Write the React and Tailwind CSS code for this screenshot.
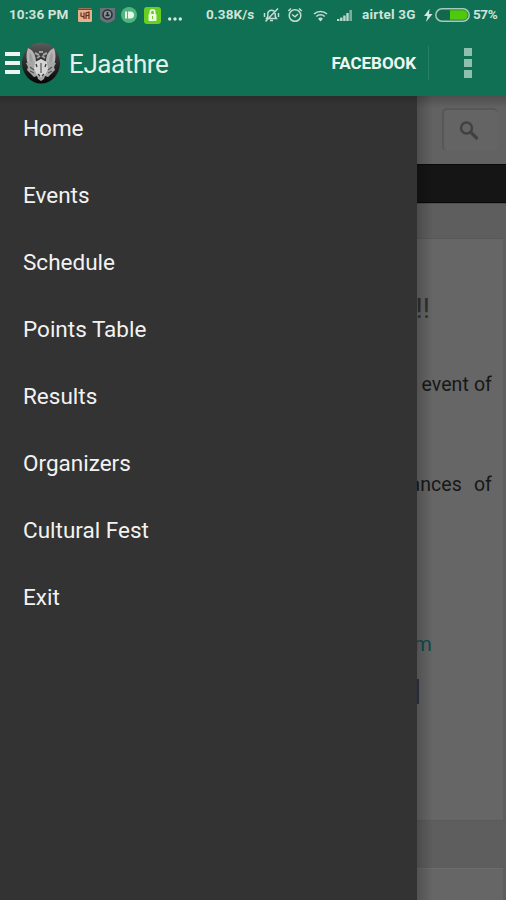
const menuItems = [
  'Home',
  'Events',
  'Schedule',
  'Points Table',
  'Results',
  'Organizers',
  'Cultural Fest',
  'Exit',
]

function StatusBar() {
  return (
    <div className="flex h-[30px] items-center pl-[9px] text-[13.500px] font-bold text-[#cfe3da] whitespace-nowrap">
      <span className="w-[69px] pb-px tracking-[0.1px]">10:36 PM</span>

      {/* notifications */}
      <svg className="w-[14px] h-[14px] mr-[8px] shrink-0" viewBox="0 0 14 14">
        <rect width="14" height="14" rx="1.5" fill="#e3b18d" />
        <path d="M0 1.200h14" stroke="#6b4a3c" strokeWidth="1.600" />
        <path d="M3 4.500V8l3 1M6 4.500V11M8 11V5l3-1v7M8 8l3-1" fill="none" stroke="#6a2d20" strokeWidth="1.200" />
      </svg>
      <svg className="w-[15px] h-[16px] mr-[6px] shrink-0" viewBox="0 0 15 16">
        <path d="M0 1h15v11l-3 2.500-4.500 1.500L3 14.500 0 12z" fill="#68727a" />
        <circle cx="7.500" cy="7.500" r="4.500" fill="#8a9096" stroke="#2c3038" strokeWidth="1.600" />
        <path d="M7.500 5v3.500M5.500 8.500h4" fill="none" stroke="#23272d" strokeWidth="1.600" />
      </svg>
      <svg className="w-[16px] h-[16px] mr-[7px] shrink-0" viewBox="0 0 16 16">
        <circle cx="8" cy="8" r="8" fill="#4fb57c" />
        <path d="M4 4.500h2v7H4zM7 4.500h2.500a3.500 3.500 0 0 1 0 7H7z" fill="#e6f6ec" />
      </svg>
      <svg className="w-[17px] h-[17px] mr-[7px] shrink-0" viewBox="0 0 17 17">
        <rect width="17" height="17" rx="3" fill="#68cf20" />
        <rect x="4.500" y="7" width="8" height="7" rx="1" fill="#f0fae9" />
        <path d="M6.300 7V5a2.200 2.200 0 0 1 4.400 0v2" fill="none" stroke="#f0fae9" strokeWidth="1.700" />
        <path d="M8.500 9v3" stroke="#68cf20" strokeWidth="1" />
      </svg>
      <svg className="w-[16px] h-[16px] mr-[22px] shrink-0" viewBox="0 0 16 16" fill="#d5e7df">
        <circle cx="1.700" cy="12" r="1.700" />
        <circle cx="7" cy="12" r="1.700" />
        <circle cx="12.300" cy="12" r="1.700" />
      </svg>

      <span className="w-[57px] pb-px tracking-[0.1px]">0.38K/s</span>
      <svg className="w-[17px] h-[16px] mr-[7px] shrink-0" viewBox="0 0 17 16" fill="none" stroke="#c3ddd2" strokeWidth="1.500">
        <path d="M3.500 11.500h10l-1.300-2V6.300a3.800 3.800 0 0 0-7.400 0v3.200zM7 13.500h3M15 1.500L2.500 14.500M1.500 6v4M15.500 6v4" />
      </svg>
      <svg className="w-[16px] h-[16px] mr-[10px] shrink-0" viewBox="0 0 16 16" fill="none" stroke="#c3ddd2" strokeWidth="1.500">
        <circle cx="8" cy="8.500" r="5.800" />
        <path d="M5 7.500l3 2.300 3-2.800M1.200 4L4 1.500M14.800 4L12 1.500" />
      </svg>
      <svg className="w-[15px] h-[13px] mr-[9px] shrink-0" viewBox="0 0 15 13" fill="none" stroke="#c3ddd2" strokeWidth="1.600">
        <path d="M1 5a9.500 9.500 0 0 1 13 0M3.300 7.500a6 6 0 0 1 8.400 0" />
        <path d="M5 9.800a3.500 3.500 0 0 1 5 0L7.500 12.500z" fill="#c3ddd2" stroke="none" />
      </svg>
      <svg className="w-[16px] h-[13px] mr-[9px] shrink-0" viewBox="0 0 16 13" fill="#bdd8cd">
        <path d="M0 10h2.400v2H0zM3.100 8.500h2.400V12H3.100zM6.200 6.500h2.400V12H6.200zM9.300 4h2.400v8H9.300z" />
        <path d="M12.400 1h2.600v11h-2.600z" opacity=".6" />
      </svg>
      <span className="w-[62px] pb-px tracking-[0.2px]">airtel 3G</span>
      <svg className="w-[9px] h-[13px] mr-[2px] shrink-0" viewBox="0 0 9 13" fill="#d5e7df">
        <path d="M5.500 0L0 7h3.500L2 13l6.500-8H5z" />
      </svg>
      <svg className="w-[35px] h-[14px] mr-[3px] shrink-0" viewBox="0 0 35 14">
        <rect x=".8" y=".8" width="33.400" height="12.400" rx="6.200" fill="#12684c" stroke="#a9c9bc" strokeWidth="1.500" />
        <path d="M15 2.200h13a4.800 4.800 0 0 1 0 9.600H15z" fill="#4fc90c" />
      </svg>
      <span className="pb-px tracking-[-0.4px]">57%</span>
    </div>
  )
}

function Logo() {
  return (
    <svg className="w-10 h-[42px] shrink-0" viewBox="0 0 40 42">
      <defs>
        <linearGradient id="disc" x1="0" y1="0" x2="0" y2="1">
          <stop offset="0" stopColor="#5c5c5c" />
          <stop offset=".45" stopColor="#303030" />
          <stop offset="1" stopColor="#050505" />
        </linearGradient>
      </defs>
      <ellipse cx="20" cy="21" rx="19" ry="20.500" fill="url(#disc)" />
      {/* ears */}
      <path d="M7 6c5 2 8 7 8 14l-8 3C5 17 5 11 7 6zM33 6c-5 2-8 7-8 14l8 3c2-6 2-12 0-17z" fill="#b5b5b5" />
      <path d="M9 10c2 3 3 6 3 10l-3 1c-1-4-1-7 0-11zM31 10c-2 3-3 6-3 10l3 1c1-4 1-7 0-11z" fill="#9d9d9d" />
      {/* forehead marks */}
      <path d="M14 11l4 2M26 11l-4 2M16 16l3-2M24 16l-3-2M18 10h4" stroke="#a0a0a0" strokeWidth="2" />
      {/* face */}
      <path d="M5 21l7-1 4 1 4-4 4 4 4-1 7 1-2 4 1 3-4 4-3 3-3-1-1 3-3 2-3-2-1-3-3 1-3-3-4-4 1-3z" fill="#a6a6a6" />
      <path d="M14 20l6-3 6 3 1 7-3 6-4 2-4-2-3-6z" fill="#d6d6d6" />
      <path d="M9 25l4 3M31 25l-4 3M9 29l4 2M31 29l-4 2M20 21v10" fill="none" stroke="#555" strokeWidth="1.200" />
      <path d="M17 32l2 2M23 32l-2 2M15 22l1 3M25 22l-1 3" stroke="#3a3a3a" strokeWidth="1.300" />
    </svg>
  )
}

function ActionBar() {
  return (
    <div className="flex h-[66px] items-center pl-[5px] pr-[34px] pb-px">
      <div className="flex w-[15px] flex-col gap-[5px]">
        <span className="h-1 bg-[#edf5f1]" />
        <span className="h-1 bg-[#edf5f1]" />
        <span className="h-1 bg-[#edf5f1]" />
      </div>
      <div className="ml-px">
        <Logo />
      </div>
      <h1 className="mt-[3px] ml-2 flex-1 text-[26px] tracking-[-0.4px] text-[#e4f0ea]">EJaathre</h1>
      <button className="mt-[3px] text-[17px] font-bold tracking-[-0.05px] text-[#eff6f2]">FACEBOOK</button>
      <span className="ml-[12px] h-[34px] w-px bg-[#288064]" />
      <button className="ml-[35px] flex w-2 flex-col gap-[3px]">
        <span className="h-2 w-2 bg-[#8fc0ad]" />
        <span className="h-2 w-2 bg-[#8fc0ad]" />
        <span className="h-2 w-2 bg-[#8fc0ad]" />
      </button>
    </div>
  )
}

function Drawer() {
  return (
    <nav className="w-[417px] shrink-0 bg-[#333333] bg-linear-to-b from-[#2b2b2b] to-[#333333] to-[9px]">
      <ul className="-mt-px">
        {menuItems.map(item => (
          <li key={item} className="flex h-[67px] items-center pl-[23px] text-[22.500px] text-[#f2f2f2]">
            {item}
          </li>
        ))}
      </ul>
    </nav>
  )
}

// page under the drawer, already dimmed
function Page() {
  return (
    <main className="relative flex min-w-0 flex-1 flex-col overflow-hidden bg-[#5e5e5e] text-[19.500px] text-[#171717]">
      <div className="flex h-[68px] shrink-0 justify-end bg-[#626262] pt-3 pr-2">
        <div className="flex h-[43px] w-14 items-center justify-center rounded-[5px] border-t-2 border-l-2 border-[#575757] bg-[#646464] pr-1">
          <svg className="w-5 h-5" viewBox="0 0 20 20" fill="none" stroke="#414141">
            <circle cx="7.500" cy="7" r="5.500" strokeWidth="2.400" />
            <path d="M11.500 11l7 7" strokeWidth="3.200" />
          </svg>
        </div>
      </div>
      <div className="h-[39px] shrink-0 border-y border-[#090909] bg-[#151515]" />
      <div className="h-[35px] shrink-0 border-t border-[#4e4e4e]" />

      <article className="mr-[3px] flex h-[582px] shrink-0 flex-col items-end border-t border-[#595959] bg-[#666666] pr-[11px] whitespace-nowrap">
        <h2 className="mt-[52px] mr-[62px] text-[28px] leading-9 text-[#303030]">!!</h2>
        <p className="mt-[43px] leading-[30px] tracking-[0.1px]">event of</p>
        <p className="mt-[70px] leading-[30px] tracking-[0.1px] [word-spacing:7px]">ances of</p>
        <a className="mt-[129px] mr-[60px] text-[21px] leading-[30px] text-[#134b4b]">m</a>
        <div className="mt-[20px] mr-[73px] h-[25px] w-5 bg-[#303348]" />
      </article>
      <div className="h-12 shrink-0 border-t border-[#5a5a5a]" />
      <div className="mr-[3px] flex-1 border-t border-[#6c6c6c] bg-[#666666]" />

      {/* shadow from the drawer edge */}
      <div className="absolute inset-y-0 left-0 w-4 bg-linear-to-r from-black/20 to-transparent" />
      <div className="absolute inset-x-0 top-0 h-3 bg-linear-to-b from-black/20 to-transparent" />
    </main>
  )
}

export default function App() {
  return (
    <div className="flex h-[900px] w-[506px] flex-col overflow-hidden font-[Roboto,sans-serif]">
      <header className="h-24 shrink-0 bg-[#0f7053]">
        <StatusBar />
        <ActionBar />
      </header>
      <div className="flex min-h-0 flex-1">
        <Drawer />
        <Page />
      </div>
    </div>
  )
}
